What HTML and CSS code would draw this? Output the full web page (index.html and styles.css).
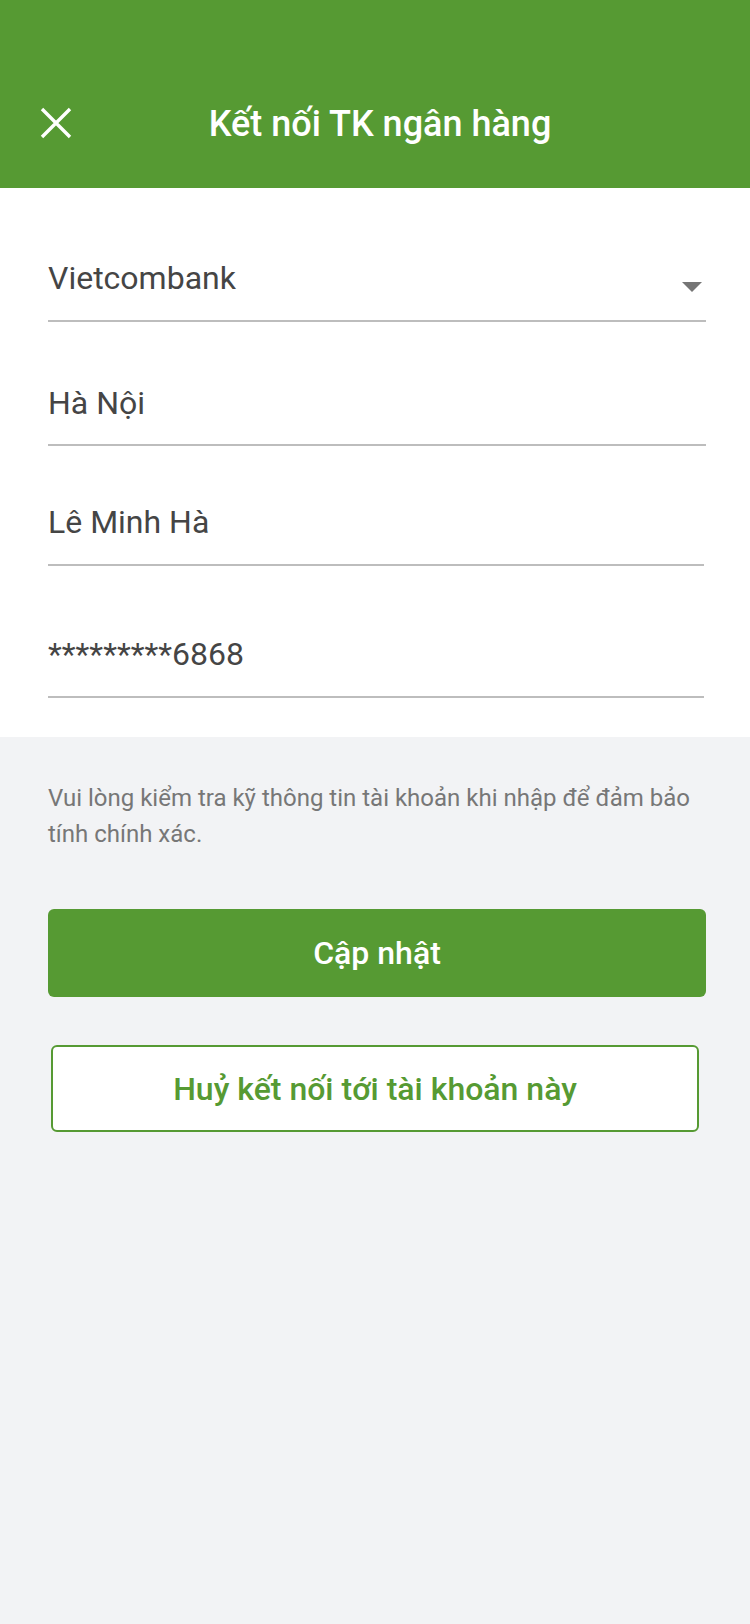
FILE: index.html
```html
<!DOCTYPE html>
<html lang="vi">
<head>
<meta charset="utf-8">
<title>Kết nối TK ngân hàng</title>
<link rel="stylesheet" href="styles.css">
</head>
<body>
<div class="screen">
  <header class="appbar">
    <div class="appbar-row">
      <button class="close-btn" aria-label="Đóng">
        <svg width="32" height="32" viewBox="0 0 32 32"><path d="M2 2 L30 30 M30 2 L2 30" stroke="#ffffff" stroke-width="3.4" fill="none"/></svg>
      </button>
      <h1 class="appbar-title">Kết nối TK ngân hàng</h1>
      <span class="appbar-spacer"></span>
    </div>
  </header>

  <section class="form">
    <div class="field field-bank">
      <span class="field-value">Vietcombank</span>
      <svg class="dropdown" width="20" height="10" viewBox="0 0 20 10"><polygon points="0,0 20,0 10,10" fill="#757575"/></svg>
    </div>
    <div class="field field-city">
      <span class="field-value">Hà Nội</span>
    </div>
    <div class="field field-name field-short">
      <span class="field-value">Lê Minh Hà</span>
    </div>
    <div class="field field-account field-short">
      <span class="field-value">*********6868</span>
    </div>
  </section>

  <section class="actions">
    <p class="note">Vui lòng kiểm tra kỹ thông tin tài khoản khi nhập để đảm bảo tính chính xác.</p>
    <button class="btn btn-primary">Cập nhật</button>
    <button class="btn btn-outline">Huỷ kết nối tới tài khoản này</button>
  </section>
</div>
</body>
</html>
```

FILE: styles.css
```css
* { box-sizing: border-box; }

html, body {
  margin: 0;
  padding: 0;
  background: #f2f3f5;
  font-family: Roboto, "Noto Sans", "Liberation Sans", sans-serif;
}

.screen {
  width: 750px;
  min-height: 1624px;
  background: #f2f3f5;
  display: flex;
  flex-direction: column;
}

.appbar {
  background: #569a33;
  height: 188px;
  padding-top: 100px;
}

.appbar-row {
  display: flex;
  align-items: center;
  height: 48px;
}

.close-btn {
  width: 80px;
  height: 48px;
  padding: 0 0 0 40px;
  margin: 0;
  border: 0;
  background: transparent;
  display: flex;
  align-items: center;
  justify-content: flex-start;
}

.close-btn svg { display: block; margin-top: -2px; }

.appbar-title {
  flex: 1;
  margin: 0;
  text-align: center;
  color: #ffffff;
  font-size: 36px;
  font-weight: 500;
  line-height: 48px;
  white-space: nowrap;
}

.appbar-spacer { width: 70px; }

.form {
  background: #ffffff;
  padding: 0 44px 39px 48px;
}

.field {
  display: flex;
  justify-content: space-between;
  align-items: flex-start;
  border-bottom: 2px solid #bdbdbd;
  padding-bottom: 22px;
}

.field-short { margin-right: 2px; }

.field-value {
  font-size: 32px;
  line-height: 40px;
  color: #454545;
}

.field-bank { padding-top: 70px; }
.field-city { padding-top: 61px; padding-bottom: 21px; }
.field-name { padding-top: 56px; padding-bottom: 22px; }
.field-account { padding-top: 68px; }

.dropdown { margin-top: 24px; margin-right: 4px; display: block; }

.actions {
  padding: 43px 44px 0 48px;
  display: flex;
  flex-direction: column;
}

.note {
  margin: 0;
  font-size: 24px;
  line-height: 36px;
  color: #777777;
}

.btn {
  font-family: Roboto, "Noto Sans", "Liberation Sans", sans-serif;
  font-size: 32px;
  font-weight: 500;
  border-radius: 6px;
  cursor: pointer;
}

.btn-primary {
  margin-top: 57px;
  height: 88px;
  background: #569a33;
  color: #ffffff;
  border: 0;
}

.btn-outline {
  margin: 48px 7px 0 3px;
  height: 87px;
  background: #ffffff;
  color: #569a33;
  border: 2px solid #569a33;
}
```
